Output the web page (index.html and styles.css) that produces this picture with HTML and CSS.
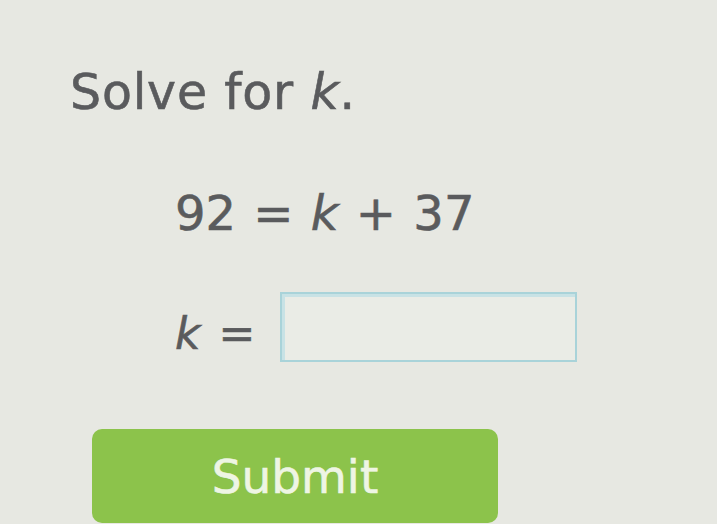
FILE: index.html
```html
<!DOCTYPE html>
<html>
<head>
<meta charset="utf-8">
<link rel="stylesheet" href="styles.css">
</head>
<body>
<div class="page">
  <div class="prompt">Solve for <i>k</i>.</div>
  <div class="equation">92 = <i>k</i> + 37</div>
  <div class="answer-row">
    <span class="answer-label"><i>k</i> =</span>
    <div class="answer-box"></div>
  </div>
  <button class="submit">Submit</button>
</div>
</body>
</html>
```
FILE: styles.css
```css
html, body {
  margin: 0;
  padding: 0;
  background: #e7e8e2;
}
.page {
  width: 717px;
  height: 524px;
  overflow: hidden;
  font-family: "DejaVu Sans", Verdana, sans-serif;
  color: #5a5b5d;
  display: flex;
  flex-direction: column;
  align-items: flex-start;
  padding-left: 70px;
  padding-top: 63px;
  box-sizing: border-box;
  -webkit-text-stroke: 0.6px currentColor;
}
.prompt {
  font-size: 49px;
  line-height: 60px;
  letter-spacing: 0.8px;
}
.equation {
  font-size: 48px;
  line-height: 60px;
  margin-top: 60px;
  margin-left: 105px;
  word-spacing: 2px;
}
.equation i, .answer-label i, .prompt i {
  font-style: oblique;
}
.answer-row {
  display: flex;
  align-items: center;
  margin-top: 47px;
  margin-left: 105px;
}
.answer-label {
  font-size: 44px;
  line-height: 60px;
  width: 105px;
  padding-top: 14px;
  word-spacing: 4px;
}
.answer-box {
  width: 297px;
  height: 70px;
  box-sizing: border-box;
  border: 2px solid #a9d3d9;
  background: #eaece6;
  box-shadow: inset 3px 3px 0 #c8e2e5;
}
.submit {
  margin-top: 65px;
  margin-left: 22px;
  width: 406px;
  height: 94px;
  border: none;
  border-radius: 10px;
  background: #8cc34b;
  color: #eef5e4;
  font-family: "DejaVu Sans", Verdana, sans-serif;
  font-size: 47px;
  padding: 0;
  -webkit-text-stroke: 0.6px #eef5e4;
}
```
